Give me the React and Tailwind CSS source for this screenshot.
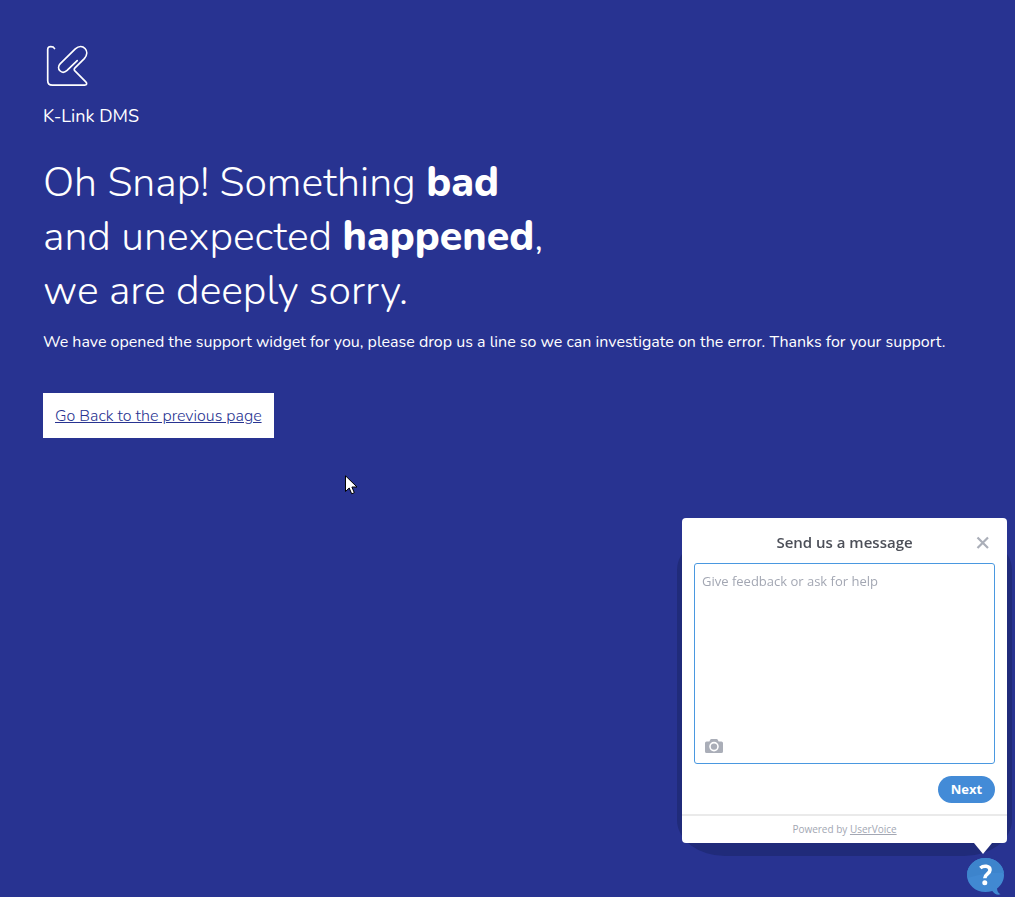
function Logo() {
  return (
    <svg
      className="block"
      width="46"
      height="44"
      viewBox="0 0 46 44"
      fill="none"
      stroke="#fff"
      strokeWidth="1.7"
      strokeLinecap="round"
      strokeLinejoin="round"
      aria-hidden="true"
    >
      <path d="M11.5 5.5 C10.5 3.2 4.7 2.2 4.7 6.5 V37.5 Q4.7 42.2 9.4 42.2 H41.5 C44 42.2 44.2 40.2 42.8 38.8 L32.4 28.4 Q30.2 26.6 32 24.8 L41.3 15.6 C48 8 39.5 -0.6 32.3 5.9 L17.3 20.6 C12.5 25.8 18.8 32.2 24.1 27.4 L34.2 17.6" />
    </svg>
  );
}

function Camera() {
  return (
    <svg className="block" width="18" height="14" viewBox="0 0 18 14" aria-hidden="true">
      <path
        fill="#aaaeb8"
        d="M5 1.2 Q5.4 0 6.5 0 H11.5 Q12.6 0 13 1.2 L13.6 2.5 H16.4 Q18 2.5 18 4.1 V12.4 Q18 14 16.4 14 H1.6 Q0 14 0 12.4 V4.1 Q0 2.5 1.6 2.5 H4.4 Z"
      />
      <circle cx="9" cy="7.6" r="4" fill="none" stroke="#fff" strokeWidth="1.6" />
    </svg>
  );
}

function Widget() {
  return (
    <div className="fixed right-2 bottom-[54px] w-[325px] font-['Open_Sans',sans-serif]">
      <div className="absolute top-4 -right-[5px] -bottom-[13px] -left-[5px] rounded-[48px/36px] bg-[#202b7a]" />
      <form onSubmit={(e) => e.preventDefault()} className="relative rounded bg-white">
        <div className="relative flex h-[45px] items-center justify-center pt-[2px]">
          <h2 className="text-[15px] leading-5 font-semibold text-[#4c4f58]">Send us a message</h2>
          <button type="button" aria-label="Close" className="absolute top-[18px] right-[18px]">
            <svg className="block" width="13" height="13" viewBox="0 0 13 13" fill="none" stroke="#aaaeb8" strokeWidth="2.2" aria-hidden="true">
              <path d="M1.5 1.5 L12 12 M12 1.5 L1.5 12" />
            </svg>
          </button>
        </div>
        <div className="relative px-3">
          <textarea
            aria-label="Message"
            placeholder="Give feedback or ask for help"
            className="block h-[201px] w-full resize-none rounded-[3px] border border-[#4a98e0] bg-white px-[7px] py-[7px] text-[13px] leading-5 text-[#4c4f58] outline-none placeholder:text-[#a3a7b3]"
          />
          <button type="button" aria-label="Attach a screenshot" className="absolute bottom-[11px] left-[23px]">
            <Camera />
          </button>
        </div>
        <div className="flex justify-end px-3 pt-3 pb-[11px]">
          <button type="submit" className="h-[27px] w-[57px] rounded-full bg-[#438bd7] text-[13px] font-bold text-white">
            Next
          </button>
        </div>
        <div className="h-[29px] border-t-2 border-[#eaeaea] text-center text-[10px] leading-[26px] text-[#a3a7b3]">
          Powered by{" "}
          <a href="#uservoice" className="underline">
            UserVoice
          </a>
        </div>
        <svg className="absolute top-full right-[14px] block" width="20" height="11" viewBox="0 0 20 11" aria-hidden="true">
          <path d="M1 0 H19 L10 11 Z" fill="#fff" />
        </svg>
      </form>
    </div>
  );
}

function HelpBadge() {
  return (
    <button type="button" aria-label="Help" className="fixed right-[10px] bottom-[1px]">
      <svg className="block" width="38" height="39" viewBox="0 0 38 39" aria-hidden="true">
        <path
          fill="#4189d2"
          d="M18.5 1 C28.8 1 37 8.4 37 18 C37 23.4 34.3 28.2 30 31.4 Q30.2 35.4 33.5 37.3 Q28.7 38.8 25.3 34 Q22 35 18.5 35 C8.2 35 0 27.6 0 18 C0 8.4 8.2 1 18.5 1 Z"
        />
        <path fill="#3d84cc" d="M18.5 1 C28.2 1 36 7.4 37 16 Q20 15 .6 21 C-2 11 6.5 1 18.5 1 Z" />
        <path
          d="M13.3 11 C16.6 8.2 23 8.6 23 13 C23 16.8 17.8 17 17.8 21.2"
          fill="none"
          stroke="#fff"
          strokeWidth="3.6"
        />
        <circle cx="17.8" cy="25.8" r="2.5" fill="#fff" />
      </svg>
    </button>
  );
}

export default function App() {
  return (
    <div className="relative min-h-screen bg-[#283391] font-['Nunito','Open_Sans',sans-serif] text-white">
      <main className="px-[43px] pt-[43px]">
        <header>
          <Logo />
          <p className="mt-[17px] text-[18px] leading-6">K-Link DMS</p>
        </header>
        <h1 className="mt-7 text-[41px] leading-[54px] font-[350]">
          Oh Snap! Something <b className="font-extrabold">bad</b>
          <br />
          and unexpected <b className="font-extrabold">happened</b>,
          <br />
          we are deeply sorry.
        </h1>
        <p className="mt-3 text-[16px] leading-6">
          We have opened the support widget for you, please drop us a line so we can investigate on the error. Thanks for
          your support.
        </p>
        <a
          href="#back"
          className="mt-[39px] inline-block bg-white px-3 pt-[11px] pb-[9px] text-[16px] leading-[25px] font-light text-[#283391] underline"
        >
          Go Back to the previous page
        </a>
      </main>
      <Widget />
      <HelpBadge />
      <svg className="pointer-events-none absolute top-[475px] left-[345px]" width="13" height="20" viewBox="0 0 13 20" aria-hidden="true">
        <path d="M.5 .8 V16.5 L4.2 13 L6.7 18.8 L9.3 17.7 L6.9 12 H12 Z" fill="#fff" stroke="#000" />
      </svg>
    </div>
  );
}
